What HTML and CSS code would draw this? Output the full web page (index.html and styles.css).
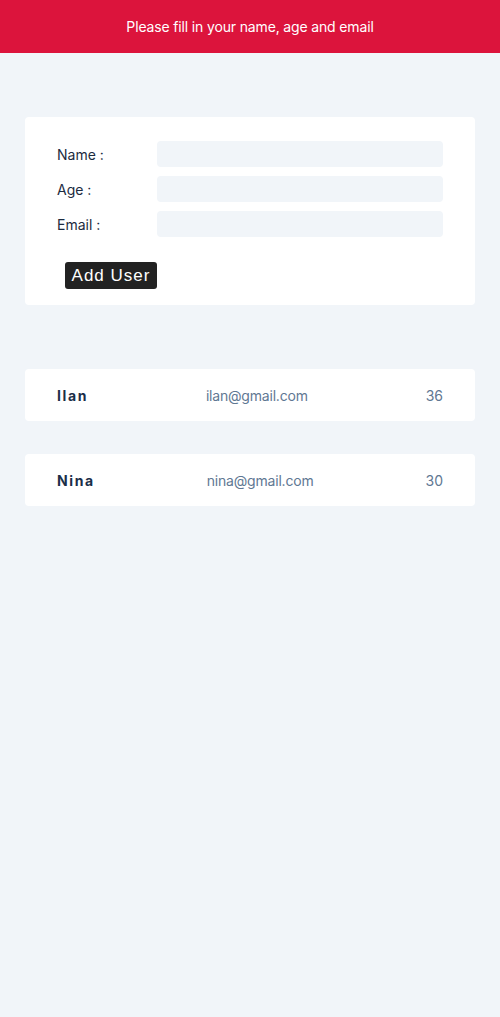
FILE: index.html
```html
<!DOCTYPE html>
<html lang="en">
<head>
<meta charset="utf-8">
<title>Users</title>
<link rel="stylesheet" href="styles.css">
</head>
<body>
<header class="topbar">Please fill in your name, age and email</header>
<main class="content">
  <section class="card form-card">
    <div class="fields">
      <label class="field"><span class="field-label">Name :</span><input class="field-input" type="text"></label>
      <label class="field"><span class="field-label">Age :</span><input class="field-input" type="number"></label>
      <label class="field"><span class="field-label">Email :</span><input class="field-input" type="email"></label>
    </div>
    <button class="add-btn" type="button">Add User</button>
  </section>
  <ul class="user-list">
    <li class="card user-row"><span class="user-name">Ilan</span><span class="user-email">ilan@gmail.com</span><span class="user-age">36</span></li>
    <li class="card user-row"><span class="user-name">Nina</span><span class="user-email">nina@gmail.com</span><span class="user-age">30</span></li>
  </ul>
</main>
</body>
</html>
```
FILE: styles.css
```css
* { box-sizing: border-box; }
html, body { margin: 0; padding: 0; }
body {
  background: #f1f5f9;
  font-family: Inter, "Noto Sans", sans-serif;
  font-size: 14px;
  color: #1e293b;
  min-height: 1017px;
}
.topbar {
  height: 53px;
  background: #dc143c;
  color: #ffffff;
  display: flex;
  align-items: center;
  justify-content: center;
  font-size: 14px;
  font-weight: 400;
  letter-spacing: -0.15px;
}
.content {
  padding: 64px 25px 0;
  display: flex;
  flex-direction: column;
  gap: 64px;
}
.card {
  background: #ffffff;
  border-radius: 4px;
}
.form-card {
  padding: 24px 32px 16px;
  display: flex;
  flex-direction: column;
  align-items: flex-start;
  gap: 25px;
}
.fields {
  display: flex;
  flex-direction: column;
  gap: 9px;
  width: 100%;
}
.field {
  display: flex;
  align-items: center;
}
.field-label {
  width: 100px;
  flex: none;
  color: #1c2b40;
}
.field-input {
  flex: 1;
  height: 26px;
  border: none;
  border-radius: 4px;
  background: #f1f5f9;
  outline: none;
  padding: 0 8px;
  font: inherit;
}
.add-btn {
  margin-left: 8px;
  height: 27px;
  padding: 0;
  background: #222222;
  color: #ffffff;
  border: none;
  border-radius: 3px;
  font-family: "Liberation Sans", Arial, sans-serif;
  font-size: 17px;
  letter-spacing: 1px;
  width: 92px;
}
.user-list {
  list-style: none;
  margin: 0;
  padding: 0;
  display: flex;
  flex-direction: column;
  gap: 33px;
}
.user-row {
  height: 52px;
  padding: 0 32px;
  display: flex;
  align-items: center;
  justify-content: space-between;
}
.user-name {
  font-weight: 700;
  letter-spacing: 1.6px;
  color: #1b2e48;
}
.user-email, .user-age {
  color: #5f7893;
}
.user-email {
  letter-spacing: -0.2px;
}
```
